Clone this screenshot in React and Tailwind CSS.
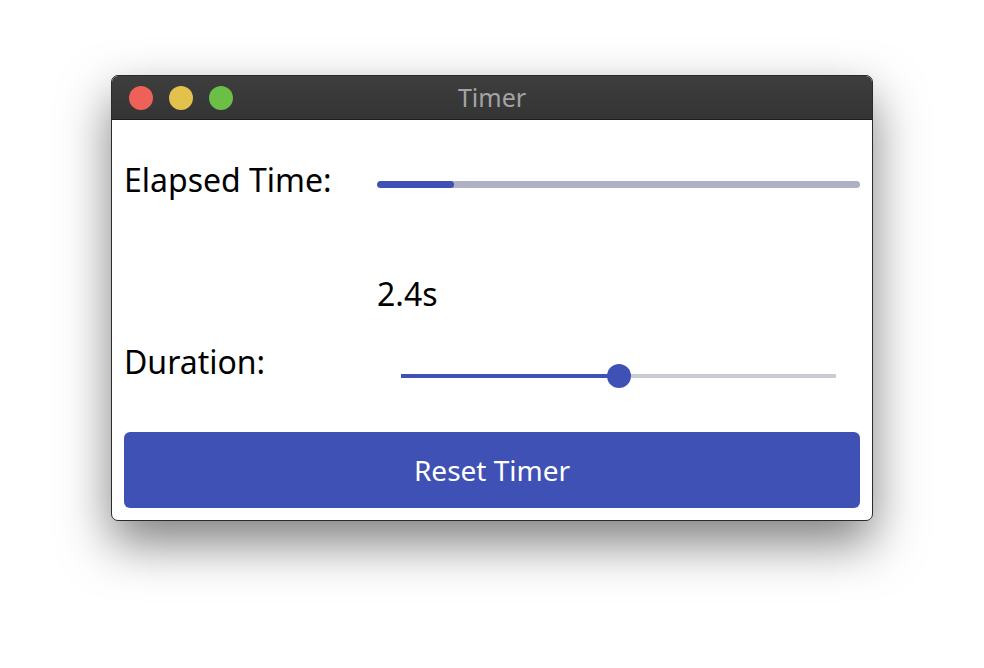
import React from "react";

export default function App() {
  const font = { fontFamily: '"Noto Sans", "Open Sans", sans-serif' };
  return (
    <div className="w-[984px] h-[668px] bg-white overflow-hidden" style={font}>
      <div className="ml-[111px] mt-[75px] w-[762px] h-[446px] rounded-[7px] border border-[#2a2a2a] bg-white overflow-hidden shadow-[0_22px_50px_rgba(0,0,0,0.5)] flex flex-col">
        <div className="relative h-[44px] shrink-0 bg-gradient-to-b from-[#3e3e3e] to-[#343434] border-b border-[#1c1c1c] flex items-center">
          <div className="flex gap-[16px] pl-[17px]">
            <span className="w-[24px] h-[24px] rounded-full bg-[#ee6158]" />
            <span className="w-[24px] h-[24px] rounded-full bg-[#e2c14c]" />
            <span className="w-[24px] h-[24px] rounded-full bg-[#6bbf46]" />
          </div>
          <div className="absolute inset-0 flex items-center justify-center text-[25px] text-[#a3a3a3]">Timer</div>
        </div>
        <div className="flex-1 flex flex-col px-[12px] text-black">
          <div className="flex items-start mt-[38px] h-[44px]">
            <div className="w-[253px] text-[32px] leading-[44px]">Elapsed Time:</div>
            <div className="flex-1 mt-[23px] h-[7px] rounded-full bg-[#aeb0c6] overflow-hidden">
              <div className="h-full w-[16%] rounded-full bg-[#3f51b5]" />
            </div>
          </div>
          <div className="flex mt-[70px] h-[44px]">
            <div className="w-[253px]" />
            <div className="text-[32px] leading-[44px]">2.4s</div>
          </div>
          <div className="flex items-start mt-[24px] h-[44px]">
            <div className="w-[253px] text-[32px] leading-[44px]">Duration:</div>
            <div className="flex-1 px-[24px] mt-[24px]">
              <div className="relative h-[24px] flex items-center">
                <div className="w-full h-[4px] bg-[#cbcbd3] flex">
                  <div className="h-full w-[50%] bg-[#3f51b5]" />
                </div>
                <div className="absolute left-[50%] -ml-[12px] top-0 w-[24px] h-[24px] rounded-full bg-[#3f51b5]" />
              </div>
            </div>
          </div>
          <button className="mt-[48px] h-[76px] w-full rounded-[6px] bg-[#3f51b5] text-white text-[28px]">
            Reset Timer
          </button>
        </div>
      </div>
    </div>
  );
}
